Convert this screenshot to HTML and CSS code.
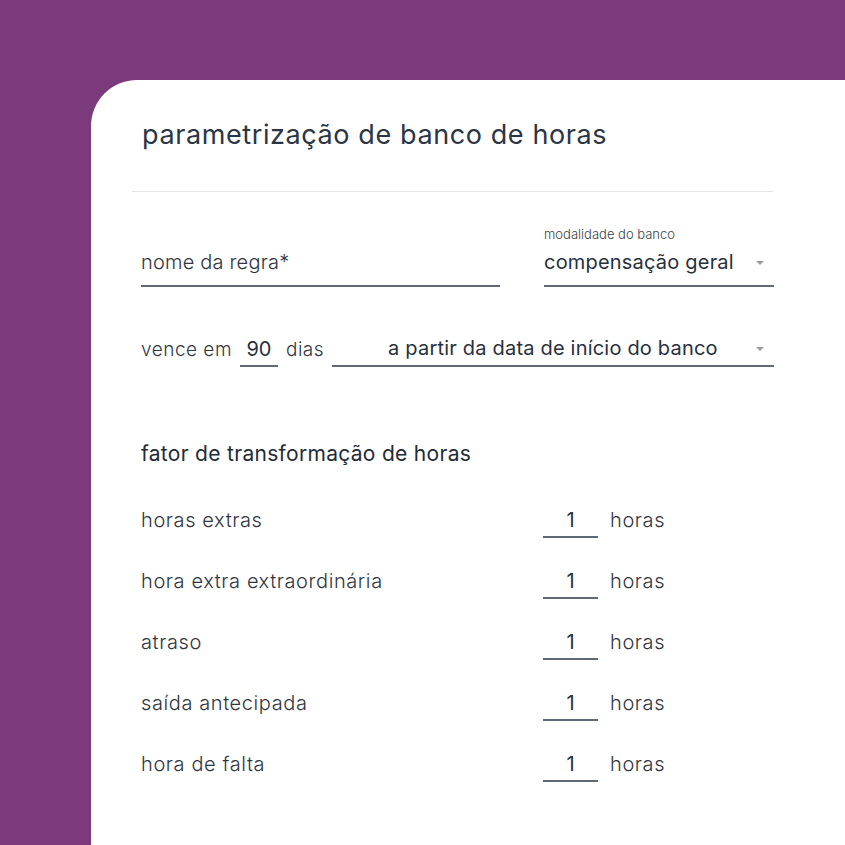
FILE: index.html
```html
<!DOCTYPE html>
<html lang="pt-BR">

<head>
	<meta charset="UTF-8">
	<title>parametrização de banco de horas</title>
	<link rel="stylesheet" href="styles.css">
</head>

<body>
	<div class="card">
		<!-- cabeçalho -->
		<div class="card-header">
			<h1 class="card-title">parametrização de banco de horas</h1>
		</div>
		<div class="divider"></div>

		<!-- formulário -->
		<div class="form">
			<div class="row row-rule">
				<div class="field field-name">
					<div class="field-value placeholder">nome da regra*</div>
				</div>
				<div class="field field-mode">
					<div class="field-label">modalidade do banco</div>
					<div class="field-value select">
						<span>compensação geral</span>
						<i class="caret"></i>
					</div>
				</div>
			</div>

			<div class="row row-expire">
				<span class="text">vence em</span>
				<div class="mini-input days">90</div>
				<span class="text">dias</span>
				<div class="select select-start">
					<span>a partir da data de início do banco</span>
					<i class="caret"></i>
				</div>
			</div>

			<h2 class="section-title">fator de transformação de horas</h2>

			<ul class="factors">
				<li><span class="text">horas extras</span><div class="mini-input">1</div><span class="text">horas</span></li>
				<li><span class="text">hora extra extraordinária</span><div class="mini-input">1</div><span class="text">horas</span></li>
				<li><span class="text">atraso</span><div class="mini-input">1</div><span class="text">horas</span></li>
				<li><span class="text">saída antecipada</span><div class="mini-input">1</div><span class="text">horas</span></li>
				<li><span class="text">hora de falta</span><div class="mini-input">1</div><span class="text">horas</span></li>
			</ul>
		</div>
	</div>
</body>

</html>
```

FILE: styles.css
```css
/* reset */
* {
	margin: 0;
	padding: 0;
	box-sizing: border-box;
}

ul {
	list-style: none;
}

html,
body {
	height: 100%;
}

body {
	background-color: #7b3a7b;
	font-family: "Inter", "Noto Sans", sans-serif;
	color: #2d3745;
	overflow: hidden;
	padding: 80px 0 0 91px;
}

/* cartão */
.card {
	background-color: #fff;
	border-top-left-radius: 46px;
	height: 100%;
}

.card-header {
	height: 111px;
	padding: 37px 0 0 51px;
}

.card-title {
	font-size: 27px;
	font-weight: 400;
	letter-spacing: 0.6px;
	color: #2a3646;
	line-height: 36px;
}

.divider {
	margin-left: 41px;
	width: 641px;
	border-top: 1.5px solid #e3e4e6;
}

/* formulário */
.form {
	padding: 0 71px 0 50px;
}

.text,
.placeholder {
	font-family: "Inter", "Noto Sans", sans-serif;
	font-weight: 300;
	font-size: 19px;
	color: #2f3642;
}

.row {
	display: flex;
	align-items: flex-end;
}

.row-rule {
	margin-top: 34px;
	justify-content: space-between;
}

.field {
	border-bottom: 2px solid #5e6976;
}

.field-name {
	width: 359px;
}

.field-mode {
	width: 230px;
}

.field-label {
	font-family: "Inter", sans-serif;
	font-weight: 300;
	font-size: 13px;
	color: #3a3f48;
	line-height: 16px;
	margin-bottom: 8px;
}

.field-value {
	height: 35px;
	padding-bottom: 11px;
	line-height: 24px;
	font-size: 20px;
	letter-spacing: 0.2px;
}

.select {
	display: flex;
	justify-content: space-between;
	align-items: center;
	padding-right: 10px;
	color: #27303d;
}

.caret {
	width: 0;
	height: 0;
	border-left: 4px solid transparent;
	border-right: 4px solid transparent;
	border-top: 4px solid #9a9ca1;
	margin-top: 2px;
}

/* linha vence em */
.row-expire {
	margin-top: 44px;
	align-items: center;
}

.row-expire .text {
	letter-spacing: 0.5px;
}

.mini-input {
	height: 36px;
	line-height: 36px;
	font-size: 20px;
	text-align: center;
	color: #27303d;
	border-bottom: 2px solid #5e6976;
}

.days {
	width: 38px;
	margin: 0 8px 0 8px;
}

.select-start {
	flex: 1;
	margin-left: 8px;
	height: 36px;
	padding-left: 56px;
	font-size: 20px;
	letter-spacing: 0.2px;
	border-bottom: 2px solid #5e6976;
}

/* fatores */
.section-title {
	margin-top: 73px;
	font-size: 21px;
	font-weight: 400;
	letter-spacing: 0.3px;
	line-height: 28px;
	color: #222b38;
}

.factors {
	margin-top: 21px;
}

.factors li {
	display: flex;
	align-items: center;
	height: 61px;
}

.factors .text {
	font-size: 20px;
	letter-spacing: 0.6px;
}

.factors li .text:first-child {
	width: 402px;
}

.factors .mini-input {
	width: 55px;
	margin: 0 12px 0 0;
}
```
